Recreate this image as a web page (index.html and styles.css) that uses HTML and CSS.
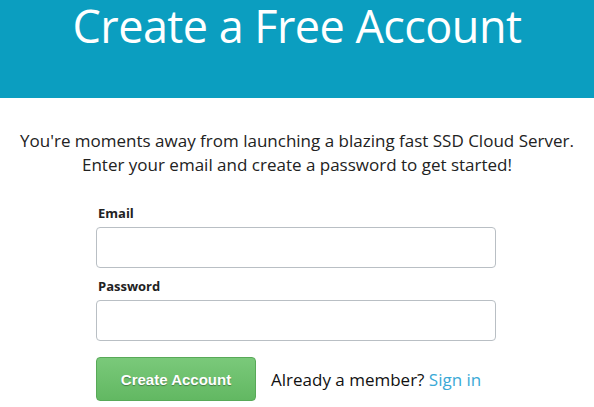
FILE: index.html
```html
<!DOCTYPE html>
<html>
<head>
<meta charset="utf-8">
<link rel="stylesheet" href="styles.css">
</head>
<body>
<header class="hero">
  <h1 class="hero-title">Create a Free Account</h1>
</header>
<main class="signup">
  <p class="intro">You're moments away from launching a blazing fast SSD Cloud Server.<br>Enter your email and create a password to get started!</p>
  <form class="form">
    <label class="field-label" for="email">Email</label>
    <input class="field-input" id="email" type="email">
    <label class="field-label" for="password">Password</label>
    <input class="field-input field-last" id="password" type="password">
    <div class="actions">
      <button class="btn-create" type="button">Create Account</button>
      <span class="member">Already a member? <a class="signin" href="#">Sign in</a></span>
    </div>
  </form>
</main>
</body>
</html>
```
FILE: styles.css
```css
* { box-sizing: border-box; }
body {
  margin: 0;
  background: #fff;
  font-family: "Open Sans", "Noto Sans", sans-serif;
  color: #222;
}
.hero {
  background: #0b9ec0;
  height: 98px;
}
.hero-title {
  margin: 0;
  text-align: center;
  color: #fff;
  font-weight: 400;
  font-size: 45px;
  line-height: 52px;
  letter-spacing: -0.55px;
}
.signup {
  padding-top: 31px;
}
.intro {
  margin: 0;
  text-align: center;
  font-size: 17px;
  line-height: 24px;
  color: #222;
}
.form {
  width: 400px;
  margin: 28px 0 0 96px;
  display: flex;
  flex-direction: column;
}
.field-label {
  font-size: 13px;
  font-weight: 700;
  color: #222;
  line-height: 16px;
  padding-left: 2px;
  margin-bottom: 6px;
}
.field-input {
  width: 400px;
  height: 41px;
  border: 1px solid #b9bfc4;
  border-radius: 4px;
  margin: 0 0 10px;
  padding: 0 10px;
  font: inherit;
}
.field-last {
  margin-bottom: 16px;
}
.actions {
  display: flex;
  align-items: center;
  gap: 15px;
}
.btn-create {
  width: 160px;
  height: 44px;
  border: 1px solid #58a958;
  border-radius: 4px;
  background: linear-gradient(#7ac97a, #62b862);
  color: #fff;
  font-family: "Liberation Sans", Arial, sans-serif;
  font-weight: 700;
  font-size: 15px;
  text-shadow: 0 1px 1px rgba(0,0,0,0.35);
  padding: 0;
}
.member {
  font-size: 17px;
  color: #111;
}
.signin {
  color: #3aa9d6;
  text-decoration: none;
}
```
